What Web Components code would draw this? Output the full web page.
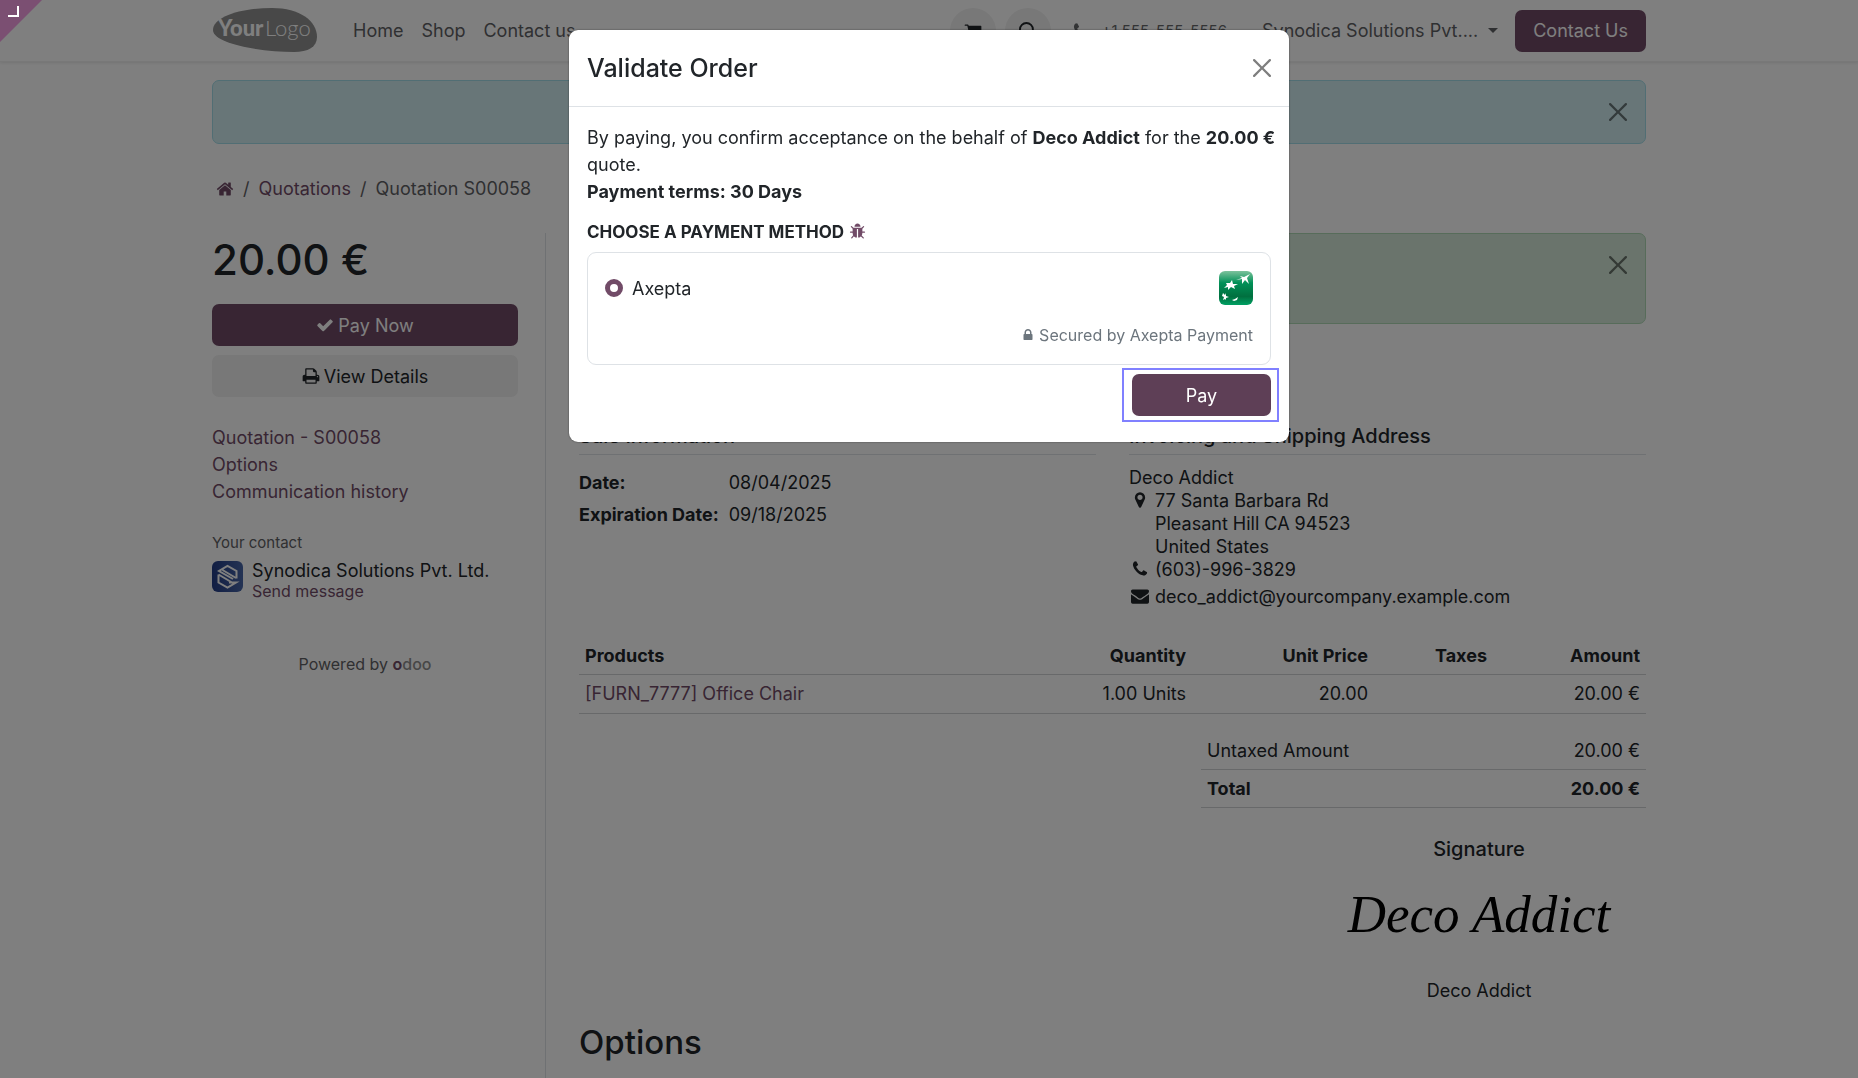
<!DOCTYPE html>
<html lang="en">
<head>
<meta charset="utf-8">
<title>Quotation S00058</title>
<style>
html, body {
	margin: 0;
	height: 100%;
}

body {
	font: 400 18px/27px Inter, "Liberation Sans", sans-serif;
	color: #212529;
	background: #fff;
	overflow: hidden;
}
</style>
</head>
<body>
<quote-page></quote-page>

<script>
// Icon outlines, all on a 1792 grid
const ICONS = {
  home: "M1472 992v480q0 26-19 45t-45 19h-384v-384h-256v384h-384q-26 0-45-19t-19-45v-480q0-1 .5-3t.5-3l575-474 575 474q1 2 1 6zm223-69l-62 74q-8 9-21 11h-3q-13 0-21-7l-692-577-692 577q-12 8-24 7-13-2-21-11l-62-74q-8-10-7-23.5t11-21.5l719-599q32-26 76-26t76 26l244 204v-195q0-14 9-23t23-9h192q14 0 23 9t9 23v408l219 182q10 8 11 21.5t-7 23.5z",
  check: "M1671 566q0 40-28 68l-724 724-136 136q-28 28-68 28t-68-28l-136-136-362-362q-28-28-28-68t28-68l136-136q28-28 68-28t68 28l294 295 656-657q28-28 68-28t68 28l136 136q28 28 28 68z",
  print: "M448 1536h896v-256h-896v256zm0-640h896v-384h-160q-40 0-68-28t-28-68v-160h-640v640zm1152 64q0-26-19-45t-45-19-45 19-19 45 19 45 45 19 45-19 19-45zm128 0v416q0 13-9.5 22.5t-22.5 9.5h-224v160q0 40-28 68t-68 28h-960q-40 0-68-28t-28-68v-160h-224q-13 0-22.5-9.5t-9.5-22.5v-416q0-79 56.5-135.5t135.5-56.5h64v-544q0-40 28-68t68-28h672q40 0 88 20t76 48l152 152q28 28 48 76t20 88v256h64q79 0 135.5 56.5t56.5 135.5z",
  lock: "M640 768h512v-192q0-106-75-181t-181-75-181 75-75 181v192zm832 96v576q0 40-28 68t-68 28h-960q-40 0-68-28t-28-68v-576q0-40 28-68t68-28h32v-192q0-184 132-316t316-132 316 132 132 316v192h32q40 0 68 28t28 68z",
  marker: "M1152 640q0-106-75-181t-181-75-181 75-75 181 75 181 181 75 181-75 75-181zm256 0q0 109-33 179l-364 774q-16 33-47.5 52t-67.5 19-67.5-19-46.5-52l-365-774q-33-70-33-179 0-212 150-362t362-150 362 150 150 362z",
  phone: "M1600 1240q0 27-10 70.5t-21 68.5q-21 50-122 106-94 51-186 51-27 0-53-3.5t-57.5-12.5-47-14.5-55.5-20.5-49-18q-98-35-175-83-127-79-264-216t-216-264q-48-77-83-175-3-9-18-49t-20.5-55.5-14.5-47-12.5-57.5-3.5-53q0-92 51-186 56-101 106-122 25-11 68.5-21t70.5-10q14 0 21 3 18 6 53 76 11 19 30 54t35 63.5 31 53.5q3 4 17.5 25t21.5 35.5 7 28.5q0 20-28.5 50t-62 55-62 53-28.5 46q0 9 5 22.5t8.5 20.5 14 24 11.5 19q76 137 174 235t235 174q2 1 19 11.5t24 14 20.5 8.5 22.5 5q18 0 46-28.5t53-62 55-62 50-28.5q14 0 28.5 7t35.5 21.5 25 17.5q25 15 53.5 31t63.5 35 54 30q70 35 76 53 3 7 3 21z",
  envelope: "M1792 710v794q0 66-47 113t-113 47h-1472q-66 0-113-47t-47-113v-794q44 49 101 87 362 246 497 345 57 42 92.5 65.5t94.5 48 110 24.5h2q51 0 110-24.5t94.5-48 92.5-65.5q170-123 498-345 57-39 100-87zm0-294q0 79-49 151t-122 123q-376 261-468 325-10 7-42.5 31t-54 38.5-52 32.5-57.5 27-50 9h-2q-23 0-50-9t-57.5-27-52-32.5-54-38.5-42.5-31q-91-64-262-182.5t-205-142.5q-62-42-117-115.5t-55-136.5q0-78 41.5-130t118.5-52h1472q65 0 112.5 47t47.5 113z",
  bug: "M1696 960q0 26-19 45t-45 19h-224q0 171-67 290l208 209q19 19 19 45t-19 45q-18 19-45 19t-45-19l-198-197q-5 5-15 13t-42 28.5-65 36.5-82 29-97 13v-896h-128v896q-51 0-101.5-13.5t-87-33-66-39-43.5-32.5l-15-14-183 207q-20 21-48 21-24 0-43-16-19-18-20.5-44.5t15.5-46.5l202-227q-58-114-58-274h-224q-26 0-45-19t-19-45 19-45 45-19h224v-294l-173-173q-19-19-19-45t19-45 45-19 45 19l173 173h844l173-173q19-19 45-19t45 19 19 45-19 45l-173 173v294h224q26 0 45 19t19 45zm-480-576h-640q0-133 93.5-226.5t226.5-93.5 226.5 93.5 93.5 226.5z",
  cart: "M704 1536q0 52-38 90t-90 38-90-38-38-90 38-90 90-38 90 38 38 90zm896 0q0 52-38 90t-90 38-90-38-38-90 38-90 90-38 90 38 38 90zm128-1088v512q0 24-16.5 42.5t-40.5 21.5l-1044 122q13 60 13 70 0 16-24 64h920q26 0 45 19t19 45-19 45-45 19h-1024q-26 0-45-19t-19-45q0-11 8-31.5t16-36 21.5-40 15.5-29.5l-177-823h-204q-26 0-45-19t-19-45 19-45 45-19h256q16 0 28.5 6.5t19.5 15.5 13 24.5 8 26 5.5 29.5 4.5 26h1201q26 0 45 19t19 45z",
  search: "M740 0a740 740 0 1 0 0 1480a740 740 0 0 0 0-1480zM740 190a550 550 0 1 1 0 1100a550 550 0 0 1 0-1100zM1280 1150l500 500-130 130-500-500z"
};

// Rules shared by every element below
const BASE = `
*, *::before, *::after { box-sizing: border-box; }
h1, h2, h3, h4, p, dl, dd, ol, ul { margin: 0; padding: 0; font-weight: 500; }
p, dl, dd, ol, ul { font-weight: 400; list-style: none; }
a { color: #714b67; text-decoration: none; }
button { font: inherit; cursor: pointer; }
`;

class BaseElement extends HTMLElement {
  constructor() {
    super();
    const template = document.createElement("template");
    template.innerHTML = `<style>${BASE}</style>${this.render()}`;
    this.attachShadow({ mode: "open" });
    this.shadowRoot.appendChild(template.content.cloneNode(true));
  }
}

class FaIcon extends HTMLElement {
  connectedCallback() {
    if (this.shadowRoot) return;
    this.attachShadow({ mode: "open" });
    this.shadowRoot.innerHTML = `
<style>
:host { display: inline-block; width: 18px; height: 18px; flex: none; vertical-align: -3px; }
svg { display: block; width: 100%; height: 100%; fill: currentColor; fill-rule: evenodd; }
</style>
<svg viewBox="0 0 1792 1792" aria-hidden="true"><path d="${ICONS[this.getAttribute("name")]}"/></svg>`;
  }
}
customElements.define("fa-icon", FaIcon);

class CloseButton extends BaseElement {
  render() {
    return `
<style>
:host { display: block; flex: none; }
button { display: block; padding: 0; border: 0; background: none; opacity: .5; }
svg { display: block; width: 18px; height: 18px; }
</style>
<button type="button" aria-label="Close">
	<svg viewBox="0 0 16 16"><path d="M.29.29a1 1 0 0 1 1.42 0L8 6.59l6.29-6.3a1 1 0 1 1 1.42 1.42L9.41 8l6.3 6.29a1 1 0 0 1-1.42 1.42L8 9.41l-6.29 6.3A1 1 0 0 1 .29 14.29L6.59 8 .29 1.71a1 1 0 0 1 0-1.42z"/></svg>
</button>`;
  }
}
customElements.define("close-button", CloseButton);

class PageAlert extends BaseElement {
  render() {
    return `
<style>
:host {
	display: flex;
	justify-content: flex-end;
	padding: 22px 18px;
	border: 1px solid #a2dce8;
	border-radius: 7px;
	background: #d1edf1;
}
:host([type="success"]) { border-color: #afd8b5; background: #d4e9d8; padding-bottom: 49px; }
</style>
<close-button></close-button>`;
  }
}
customElements.define("page-alert", PageAlert);

class SiteHeader extends BaseElement {
  render() {
    return `
<style>
:host { display: block; border-bottom: 1px solid #f0f0f0; box-shadow: 0 1px 3px rgba(0, 0, 0, .1); }
nav { display: flex; align-items: center; height: 61px; max-width: 1466px; margin: 0 auto; padding: 0 16px; }
svg.logo { display: block; width: 106px; height: 46px; margin-right: 26px; }
.logo text { font-family: Lato, sans-serif; font-size: 22px; fill: #fff; }
a.link { padding: 0 9px; color: #5f6164; }
.tools { display: flex; align-items: center; margin-left: auto; }
.round {
	display: grid;
	place-items: center;
	width: 46px;
	height: 46px;
	margin-right: 9px;
	padding: 0;
	border: 0;
	border-radius: 50%;
	background: #f0f0f0;
	color: #212529;
}
.phone { display: flex; align-items: center; gap: 12px; margin: 0 35px 0 12px; color: #66686b; font-size: 15px; }
.user { display: flex; align-items: center; gap: 10px; padding: 0; border: 0; background: none; color: #5f6164; }
.user::after { content: ""; border: 5px solid transparent; border-top-color: currentColor; border-bottom: 0; }
.cta { display: block; height: 42px; margin-left: 17px; padding: 0 18px; border-radius: 7px; background: #714b67; color: #fff; line-height: 42px; }
</style>
<nav>
	<a href="#" aria-label="Your Logo"><svg class="logo" viewBox="0 1 106 46">
		<path d="M1 23C1 10 28 1 60 1c28 0 45 13 45 29 0 10-9 15-23 15C50 45 1 37 1 23z" fill="#909090"/>
		<text x="6" y="29" font-weight="900">Your</text>
		<text x="53" y="29" font-weight="300">Logo</text>
	</svg></a>
	<a class="link" href="#">Home</a>
	<a class="link" href="#">Shop</a>
	<a class="link" href="#">Contact us</a>
	<div class="tools">
		<button class="round" aria-label="Cart"><fa-icon name="cart"></fa-icon></button>
		<button class="round" aria-label="Search"><fa-icon name="search"></fa-icon></button>
		<span class="phone"><fa-icon name="phone"></fa-icon>+1 555-555-5556</span>
		<button class="user">Synodica Solutions Pvt....</button>
		<a class="cta" href="#">Contact Us</a>
	</div>
</nav>`;
  }
}
customElements.define("site-header", SiteHeader);

class BreadCrumb extends BaseElement {
  render() {
    return `
<style>
:host { display: block; }
ol { display: flex; gap: 9px; padding-left: 4px; color: #5f6164; }
li + li::before { content: "/"; margin-right: 9px; }
</style>
<nav aria-label="breadcrumb">
	<ol>
		<li><a href="#" aria-label="Home"><fa-icon name="home"></fa-icon></a></li>
		<li><a href="#">Quotations</a></li>
		<li>Quotation S00058</li>
	</ol>
</nav>`;
  }
}
customElements.define("bread-crumb", BreadCrumb);

class QuoteSidebar extends BaseElement {
  render() {
    return `
<style>
:host { display: block; width: 334px; flex: none; padding-right: 27px; border-right: 1px solid #dee2e6; }
h2 { font-size: 42px; line-height: 54px; margin-bottom: 17px; }
.btn {
	display: flex;
	align-items: center;
	justify-content: center;
	gap: 4px;
	height: 42px;
	margin-bottom: 9px;
	border-radius: 7px;
	background: #f0f0f0;
	color: #212529;
}
.btn.primary { background: #714b67; color: #fff; }
ul { margin: 27px 0 26px; }
h3 { font-size: 15px; line-height: 24px; font-weight: 400; color: #5f6164; }
.contact { display: flex; gap: 9px; margin-top: 6px; }
.contact svg { width: 31px; height: 31px; }
.contact p { line-height: 20px; }
.contact a { display: block; font-size: 16px; line-height: 20px; }
.powered { margin-top: 51px; text-align: center; font-size: 16px; line-height: 24px; color: #5f6164; }
.powered b { font-weight: 600; color: #714b67; }
.powered a { font-weight: 500; color: #8f8f8f; }
</style>
<h2>20.00 €</h2>
<a class="btn primary" href="#"><fa-icon name="check"></fa-icon>Pay Now</a>
<a class="btn" href="#"><fa-icon name="print"></fa-icon>View Details</a>
<ul>
	<li><a href="#">Quotation - S00058</a></li>
	<li><a href="#">Options</a></li>
	<li><a href="#">Communication history</a></li>
</ul>
<h3>Your contact</h3>
<div class="contact">
	<svg viewBox="0 0 31 31">
		<defs><linearGradient id="blue"><stop offset="0" stop-color="#233c86"/><stop offset="1" stop-color="#4866a8"/></linearGradient></defs>
		<rect width="31" height="31" rx="6" fill="url(#blue)"/>
		<path d="M24.500 17.500V10L15.500 5L7 10L21 18M10.500 9L24 17M6.500 13.500V21.500L15.500 26.500L24 21.500L17 21.500M6.500 13.500L20 21.500" fill="none" stroke="#fff" stroke-width="2"/>
	</svg>
	<div>
		<p>Synodica Solutions Pvt. Ltd.</p>
		<a href="#">Send message</a>
	</div>
</div>
<p class="powered">Powered by <a href="#"><b>o</b>doo</a></p>`;
  }
}
customElements.define("quote-sidebar", QuoteSidebar);

class QuoteInfo extends BaseElement {
  render() {
    return `
<style>
:host { display: grid; grid-template-columns: 1fr 1fr; gap: 33px; }
h4 { padding-bottom: 4px; border-bottom: 1px solid #dee2e6; font-size: 20px; line-height: 27px; }
table { margin-top: 14px; border-spacing: 0; }
th, td { padding: 0 10px 5px 0; text-align: left; line-height: 27px; }
th { font-weight: 700; }
address { margin-top: 11px; font-style: normal; line-height: 23px; }
address div { display: flex; gap: 6px; }
address fa-icon { margin: 2px 0 0 2px; }
.mail { margin-top: 4px; }
</style>
<section>
	<h4>Sale Information</h4>
	<table>
		<tr><th scope="row">Date:</th><td>08/04/2025</td></tr>
		<tr><th scope="row">Expiration Date:</th><td>09/18/2025</td></tr>
	</table>
</section>
<section>
	<h4>Invoicing and Shipping Address</h4>
	<address>
		<span>Deco Addict</span>
		<div><fa-icon name="marker"></fa-icon><span>77 Santa Barbara Rd<br>Pleasant Hill CA 94523<br>United States</span></div>
		<div><fa-icon name="phone"></fa-icon><span>(603)-996-3829</span></div>
		<div class="mail"><fa-icon name="envelope"></fa-icon><span>deco_addict@yourcompany.example.com</span></div>
	</address>
</section>`;
  }
}
customElements.define("quote-info", QuoteInfo);

class QuoteLines extends BaseElement {
  render() {
    return `
<style>
:host { display: block; }
table { width: 100%; border-collapse: collapse; }
th, td { padding: 5px 6px; border-bottom: 1px solid #d0d2d4; text-align: right; line-height: 28px; }
th { font-weight: 700; }
thead th { line-height: 27px; }
th:first-child, td:first-child { text-align: left; }
.qty, .price { width: 182px; }
.taxes { width: 119px; }
.amount { width: 153px; }
.totals { width: 445px; margin: 18px 0 0 auto; }
.totals td, .totals th { line-height: 27px; }
</style>
<table>
	<thead>
		<tr><th>Products</th><th class="qty">Quantity</th><th class="price">Unit Price</th><th class="taxes">Taxes</th><th class="amount">Amount</th></tr>
	</thead>
	<tbody>
		<tr><td><a href="#">[FURN_7777] Office Chair</a></td><td>1.00 Units</td><td>20.00</td><td></td><td>20.00 €</td></tr>
	</tbody>
</table>
<table class="totals">
	<tr><td>Untaxed Amount</td><td>20.00 €</td></tr>
	<tr><th scope="row">Total</th><th>20.00 €</th></tr>
</table>`;
  }
}
customElements.define("quote-lines", QuoteLines);

class QuoteSignature extends BaseElement {
  render() {
    return `
<style>
:host { display: block; width: 334px; margin-left: auto; text-align: center; }
h4 { font-size: 20px; line-height: 27px; }
.sign { margin: 12px 0 24px; font: italic 53px/78px "Liberation Serif", serif; color: #000; }
</style>
<h4>Signature</h4>
<p class="sign">Deco Addict</p>
<p>Deco Addict</p>`;
  }
}
customElements.define("quote-signature", QuoteSignature);

class PaymentDialog extends BaseElement {
  render() {
    return `
<style>
:host {
	position: fixed;
	inset: 0;
	display: flex;
	justify-content: center;
	align-items: flex-start;
	padding-top: 30px;
	background: rgba(0, 0, 0, .5);
}
[role="dialog"] { width: 720px; max-width: 100%; border-radius: 9px; background: #fff; box-shadow: 0 0 2px rgba(0, 0, 0, .5); }
header { display: flex; align-items: center; justify-content: space-between; height: 77px; padding: 0 18px; border-bottom: 1px solid #dee2e6; }
h2 { font-size: 25px; line-height: 40px; }
.body { padding: 17px 18px 26px; }
.terms { margin-right: -9px; }
b { font-weight: 700; white-space: nowrap; }
h3 { margin: 14px 0 6px; font-size: 17px; line-height: 27px; font-weight: 700; }
h3 a { margin-left: 5px; }
h3 fa-icon { width: 17px; height: 17px; vertical-align: -2px; }
.method { padding: 18px 17px 17px; border: 1px solid #dee2e6; border-radius: 9px; }
.row { display: flex; align-items: center; gap: 9px; }
.row svg { width: 34px; height: 34px; margin-left: auto; }
input { appearance: none; width: 18px; height: 18px; margin: 0; border: 5px solid #714b67; border-radius: 50%; background: #fff; }
.secured { margin: 18px 0 0; text-align: right; font-size: 16px; line-height: 24px; color: #6c757d; }
.secured fa-icon { width: 14px; height: 14px; vertical-align: -1px; }
.actions { display: flex; justify-content: flex-end; margin-top: 9px; }
.focus { margin: -6px -8px -6px 0; padding: 4px 6px 4px 8px; border: 2px solid #8080ff; }
.pay { display: block; width: 139px; height: 42px; padding: 0; border: 0; border-radius: 7px; background: #5e3f56; color: #fff; }
</style>
<div role="dialog" aria-labelledby="title">
	<header>
		<h2 id="title">Validate Order</h2>
		<close-button></close-button>
	</header>
	<div class="body">
		<p class="terms">By paying, you confirm acceptance on the behalf of <b>Deco Addict</b> for the <b>20.00 €</b> quote.</p>
		<p><b>Payment terms: 30 Days</b></p>
		<h3>CHOOSE A PAYMENT METHOD<a href="#" aria-label="Debug"><fa-icon name="bug"></fa-icon></a></h3>
		<div class="method">
			<div class="row">
				<input type="radio" id="axepta" name="method" checked>
				<label for="axepta">Axepta</label>
				<svg viewBox="0 0 34 34">
					<defs><linearGradient id="green" x2="0" y2="1">
						<stop offset="0" stop-color="#7cc29c"/><stop offset=".35" stop-color="#009057"/>
						<stop offset=".75" stop-color="#00703f"/><stop offset="1" stop-color="#00a063"/>
					</linearGradient></defs>
					<rect width="34" height="34" rx="6" fill="url(#green)"/>
					<path fill="#fff" d="M17 9l6-2-2-2 4 1 6-3-3 4 2 6-4-4-3 4 0-5zM5 17l3-3-1-2 4 0 2-3 1 4 5 0-4 2 1 3-4-2-3 3 0-3zM4 29l1-3-2-1 1-3 2 2 1-2 0 3 3 1-3 1 0 2-1-1zM13 29l3-1 3-2-1 3-3 1z"/>
				</svg>
			</div>
			<p class="secured"><fa-icon name="lock"></fa-icon> Secured by Axepta Payment</p>
		</div>
		<div class="actions"><div class="focus"><button class="pay" type="button">Pay</button></div></div>
	</div>
</div>`;
  }
}
customElements.define("payment-dialog", PaymentDialog);

class DebugCorner extends BaseElement {
  render() {
    return `
<style>
:host { position: fixed; top: 0; left: 0; }
svg { display: block; width: 42px; height: 42px; }
</style>
<svg viewBox="0 0 42 42" aria-hidden="true"><path d="M0 0h42L0 42z" fill="#7b4f72"/><path d="M8 16h10V6" fill="none" stroke="#fff" stroke-width="2"/></svg>`;
  }
}
customElements.define("debug-corner", DebugCorner);

class QuotePage extends BaseElement {
  render() {
    return `
<style>
:host { display: block; }
main { max-width: 1466px; margin: 0 auto; padding: 18px 16px 0; }
bread-crumb { margin: 31px 0; }
.columns { display: flex; min-height: calc(100vh - 233px); }
article { flex: 1; min-width: 0; padding-left: 33px; }
quote-info { margin: 99px 0 29px; }
quote-signature { margin-top: 28px; }
h2 { margin-top: 17px; font-size: 33px; line-height: 43px; }
</style>
<site-header></site-header>
<main>
	<page-alert></page-alert>
	<bread-crumb></bread-crumb>
	<div class="columns">
		<quote-sidebar></quote-sidebar>
		<article>
			<page-alert type="success"></page-alert>
			<quote-info></quote-info>
			<quote-lines></quote-lines>
			<quote-signature></quote-signature>
			<h2>Options</h2>
		</article>
	</div>
</main>
<payment-dialog></payment-dialog>
<debug-corner></debug-corner>`;
  }
}
customElements.define("quote-page", QuotePage);
</script>
</body>
</html>
